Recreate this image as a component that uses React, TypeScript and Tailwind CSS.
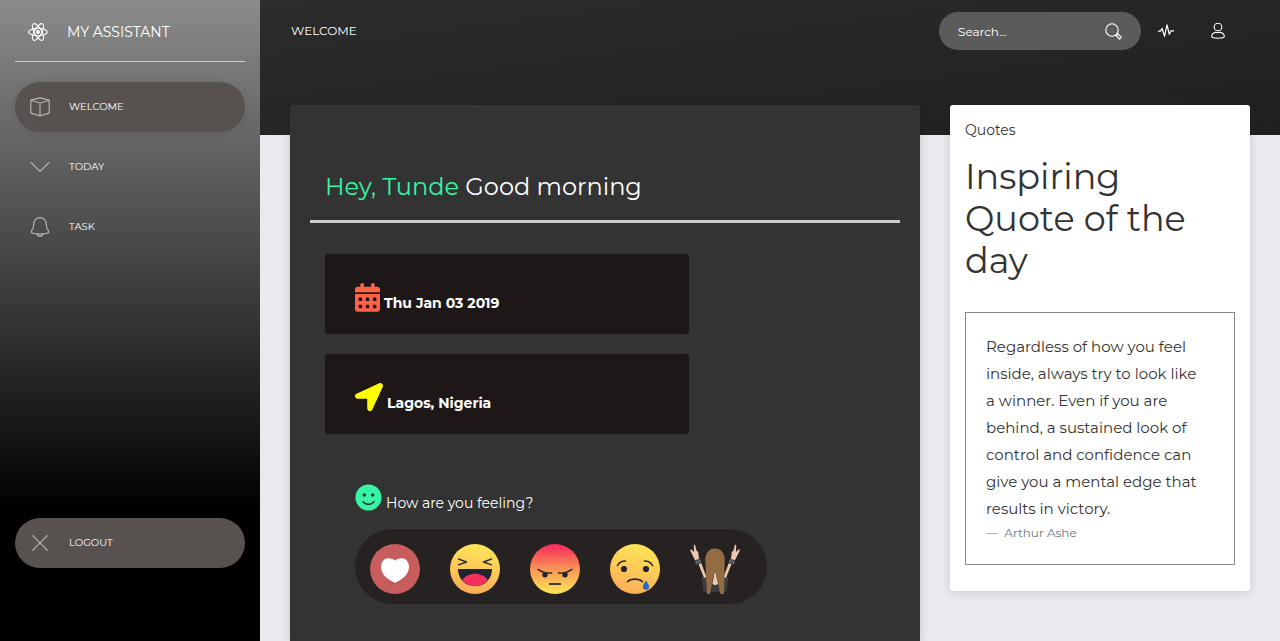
import React from "react";
import { FaCalendarAlt, FaLocationArrow, FaSmile } from "react-icons/fa";

type IconProps = { className?: string };

function AtomIcon({ className }: IconProps) {
  return (
    <svg viewBox="0 0 24 24" fill="none" stroke="currentColor" strokeWidth="1.3" className={className}>
      <ellipse cx="12" cy="12" rx="11.3" ry="4.4" />
      <ellipse cx="12" cy="12" rx="11.3" ry="4.4" transform="rotate(60 12 12)" />
      <ellipse cx="12" cy="12" rx="11.3" ry="4.4" transform="rotate(120 12 12)" />
      <circle cx="12" cy="12" r="2.3" fill="currentColor" stroke="none" />
    </svg>
  );
}

function BoxIcon({ className }: IconProps) {
  return (
    <svg viewBox="0 0 20 20" fill="none" stroke="currentColor" strokeWidth="1.2" strokeLinejoin="round" className={className}>
      <path d="M10 .8 19.200 3.200V16.200L10 18.800 .8 16.200V3.200ZM.8 3.200 10 6 19.200 3.200M10 6V18.800" />
    </svg>
  );
}

function ChevronIcon({ className }: IconProps) {
  return (
    <svg viewBox="0 0 20 20" fill="none" stroke="currentColor" strokeWidth="1.2" strokeLinecap="round" className={className}>
      <path d="M1 5.300 10 14.300 19 5.300" />
    </svg>
  );
}

function BellIcon({ className }: IconProps) {
  return (
    <svg viewBox="0 0 20 20" fill="none" stroke="currentColor" strokeWidth="1.2" strokeLinejoin="round" className={className}>
      <path d="M10 .6C5.800 .6 3.700 4 3.700 7.300C3.700 11 3 12 1.600 13.800C.8 15 1.400 16 3.200 16.400C7.500 17.300 12.500 17.300 16.800 16.400C18.600 16 19.200 15 18.400 13.800C17 12 16.300 11 16.300 7.300C16.300 4 14.200 .6 10 .6Z" />
      <path d="M7.300 17.200C7.800 20 12.200 20 12.700 17.200" />
    </svg>
  );
}

function CrossIcon({ className }: IconProps) {
  return (
    <svg viewBox="0 0 20 20" fill="none" stroke="currentColor" strokeWidth="1.2" strokeLinecap="round" className={className}>
      <path d="M2.7 2.7 17.3 17.3M17.3 2.7 2.7 17.3" />
    </svg>
  );
}

function SearchIcon({ className }: IconProps) {
  return (
    <svg viewBox="0 0 17 17" fill="none" stroke="currentColor" strokeWidth="1.1" className={className}>
      <circle cx="7" cy="7" r="6.2" />
      <path d="M11.3 11.7 12.3 12.7M12.9 10.9 16.3 14.3 14.6 16.2 11.2 12.7Z" />
    </svg>
  );
}

function PulseIcon({ className }: IconProps) {
  return (
    <svg viewBox="0 0 16 16" fill="none" stroke="currentColor" strokeWidth="1.2" strokeLinejoin="round" className={className}>
      <path d="M0 8.200H2.500L4 5.300 6.500 13.300 9 1.800 11.300 11.300 13 7.800H16" />
    </svg>
  );
}

function UserIcon({ className }: IconProps) {
  return (
    <svg viewBox="0 0 16 16" fill="none" stroke="currentColor" strokeWidth="1.1" className={className}>
      <ellipse cx="8" cy="4" rx="3.800" ry="3.800" />
      <path d="M5.500 9.200C3.300 9.900 1.700 11.500 1.700 13.500C1.700 14.600 4 15.200 8 15.200S14.300 14.600 14.300 13.500C14.300 11.500 12.700 9.900 10.500 9.200C9 9.700 7 9.700 5.500 9.200Z" />
    </svg>
  );
}

function LoveFace() {
  return (
    <svg viewBox="0 0 50 50" className="size-full">
      <circle cx="25" cy="25" r="25" fill="#c75d5c" />
      <path d="M25 40.500C20 37 11 31 11 22.500C11 17.500 14.500 14.600 18.200 14.600C21.300 14.600 23.800 16.200 25 18.500C26.200 16.200 28.700 14.600 31.800 14.600C35.500 14.600 39 17.500 39 22.500C39 31 30 37 25 40.500Z" fill="#9e4644" opacity=".5" />
      <path d="M25 39C19 36 11 31.500 11 22.500C11 17.500 14.500 14.200 18.200 14.200C21.300 14.200 24 15 25 16.800C26 15 28.700 14.200 31.800 14.200C35.500 14.200 39 17.500 39 22.500C39 31.500 31 36 25 39Z" fill="#fff" />
    </svg>
  );
}

function LaughFace() {
  return (
    <svg viewBox="0 0 50 50" className="size-full">
      <defs>
        <linearGradient id="laugh" x1=".6" y1="0" x2=".4" y2="1">
          <stop offset=".1" stopColor="#fee157" />
          <stop offset="1" stopColor="#fcac59" />
        </linearGradient>
      </defs>
      <circle cx="25" cy="25" r="25" fill="url(#laugh)" />
      <path d="M8 25H42C42 34.500 35.500 42 25 42S8 34.500 8 25Z" fill="#1e2530" />
      <path d="M12 36C15 32 20 29.700 25 29.700S35 32 38 36C34.300 40 30 42 25 42S15.700 40 12 36Z" fill="#f72f5c" />
      <path d="M8.500 15 16.500 18 8.500 20.800M41.500 15 33.500 18 41.500 20.800" fill="none" stroke="#2d2c2f" strokeWidth="1.400" strokeLinecap="round" strokeLinejoin="round" />
    </svg>
  );
}

function AngryFace() {
  return (
    <svg viewBox="0 0 50 50" className="size-full">
      <defs>
        <linearGradient id="angry" x1=".5" y1="0" x2=".5" y2="1">
          <stop offset=".05" stopColor="#f7315b" />
          <stop offset=".5" stopColor="#fa9455" />
          <stop offset=".95" stopColor="#fee157" />
        </linearGradient>
      </defs>
      <circle cx="25" cy="25" r="25" fill="url(#angry)" />
      <circle cx="15" cy="30.700" r="2.700" fill="#1e2530" />
      <circle cx="35" cy="30.700" r="2.700" fill="#1e2530" />
      <path d="M8 25.300C12 28 16 29.300 21.500 29M42 25.300C38 28 34 29.300 28.500 29" fill="none" stroke="#2d2c2f" strokeWidth="1.500" strokeLinecap="round" />
      <path d="M19 40H31" stroke="#2d2c2f" strokeWidth="1.800" />
    </svg>
  );
}

function SadFace() {
  return (
    <svg viewBox="0 0 50 50" className="size-full">
      <defs>
        <linearGradient id="sad" x1=".65" y1="0" x2=".35" y2="1">
          <stop offset=".1" stopColor="#fee157" />
          <stop offset="1" stopColor="#fcac59" />
        </linearGradient>
      </defs>
      <circle cx="25" cy="25" r="25" fill="url(#sad)" />
      <circle cx="14" cy="25" r="3.100" fill="#1e2530" />
      <circle cx="36" cy="25" r="3.100" fill="#1e2530" />
      <path d="M7.500 21.500C9 18.500 11.500 17 15.500 17M42.500 21.500C41 18.500 38.500 17 34.500 17M17.500 37.700C21 34.300 29 34.300 32.500 37.700" fill="none" stroke="#2d2c2f" strokeWidth="1.600" strokeLinecap="round" />
      <path d="M36 36.500C37.500 39 39.100 40.800 39.100 42.700A3.100 3.100 0 0 1 32.900 42.700C32.900 40.800 34.500 39 36 36.500Z" fill="#2667c6" />
    </svg>
  );
}

function RockArm() {
  return (
    <g>
      <path d="M14 34 8.300 19.500 4.500 15.200 0 6 1.200 5.200 4 8 3.800 1.200 5 .5 6.500 6.500 8.200 8 9 14.500 11.200 19 16.500 33Z" fill="#ecc9ae" />
      <path d="M4.700 16.500 10 14.300 11.500 19.200 6.500 21Z" fill="#4b4b4f" />
      <path d="M5.800 18.700 10.800 16.700" stroke="#b5b5b8" strokeWidth="1" strokeDasharray="1.200 1.200" />
    </g>
  );
}

function RockFace() {
  return (
    <svg viewBox="0 0 50 50" className="size-full">
      <path d="M11.500 33.500 15.500 32 20 36H30L34.500 32 38.500 33.500 36.500 48H13.500Z" fill="#3d3d3f" />
      <RockArm />
      <g transform="matrix(-1 0 0 1 50 0)">
        <RockArm />
      </g>
      <path d="M25 26 28 39.500C26.500 41.500 23.500 41.500 22.500 39.500Z" fill="#ecc9ae" />
      <path d="M15.300 16C15.300 9 19 4.500 25 4.500S34.700 9 34.700 16L34 50H30.300L27.500 36 25 26 22.500 36 20 50H17Z" fill="#936c43" />
    </svg>
  );
}

const moods = [
  { label: "Loved", Face: LoveFace },
  { label: "Happy", Face: LaughFace },
  { label: "Angry", Face: AngryFace },
  { label: "Sad", Face: SadFace },
  { label: "Rocking", Face: RockFace },
];

type NavItemProps = {
  label: string;
  Icon: (props: IconProps) => React.ReactElement;
  filled?: boolean;
};

function NavItem({ label, Icon, filled }: NavItemProps) {
  const base = "flex h-[50px] items-center gap-[19px] rounded-full px-[15px] text-[10px] text-white";
  return (
    <a href="#" className={filled ? `${base} bg-[#575250] shadow-[0_1px_10px_rgba(0,0,0,0.08)]` : base}>
      <Icon className="size-5 text-white/55" />
      <span className="pb-[2px]">{label}</span>
    </a>
  );
}

function Sidebar() {
  return (
    <aside className="flex w-[260px] shrink-0 flex-col bg-linear-to-b/srgb from-[#8b8b8b] to-black to-80% px-[15px]">
      <a href="#" className="flex h-[62px] items-center gap-[19px] border-b border-white/60 pt-[2px] pl-[13px] text-sm text-white">
        <AtomIcon className="size-5" />
        MY ASSISTANT
      </a>
      <nav className="mt-5 flex grow flex-col gap-[10px] pb-[73px]">
        <NavItem label="WELCOME" Icon={BoxIcon} filled />
        <NavItem label="TODAY" Icon={ChevronIcon} />
        <NavItem label="TASK" Icon={BellIcon} />
        <div className="mt-auto">
          <NavItem label="LOGOUT" Icon={CrossIcon} filled />
        </div>
      </nav>
    </aside>
  );
}

function TopBar() {
  return (
    <header className="h-[135px] shrink-0 bg-linear-to-br from-[#2c2c2c] to-[#202020] px-[31px] pt-3 text-white">
      <div className="flex h-[38px] items-center">
        <a href="#" className="mr-auto text-xs">WELCOME</a>
        <form className="flex h-full w-[202px] items-center rounded-full bg-[#5b5b5b] px-[19px]">
          <input
            type="search"
            aria-label="Search"
            placeholder="Search..."
            className="min-w-0 grow bg-transparent pt-[2px] text-xs outline-none placeholder:text-white"
          />
          <button type="button" aria-label="Submit search">
            <SearchIcon className="size-[17px]" />
          </button>
        </form>
        <button type="button" aria-label="Activity" className="ml-[17px]">
          <PulseIcon className="size-4" />
        </button>
        <button type="button" aria-label="Account" className="mr-[23px] ml-9">
          <UserIcon className="size-4" />
        </button>
      </div>
    </header>
  );
}

function WelcomeCard() {
  return (
    <section className="min-h-full rounded-t-[3px] bg-[#333333] px-5 pt-16 text-white shadow-[0_2px_10px_rgba(0,0,0,0.15)]">
      <h1 className="border-b-[3px] border-[#cccccc] px-[15px] pb-[15px] text-2xl leading-9">
        <span className="text-[#36f5a5]">Hey, Tunde</span> Good morning
      </h1>
      <div className="mt-[31px] flex flex-col gap-5 px-[15px]">
        <p className="flex h-20 w-[65%] items-start gap-1 rounded-[3px] bg-[#1e1717] px-[30px] pt-[29px] text-sm font-bold">
          <FaCalendarAlt className="h-[29px] w-[25px] text-[#ff6347]" />
          <span className="pt-[10px]">Thu Jan 03 2019</span>
        </p>
        <p className="flex h-20 w-[65%] items-start gap-1 rounded-[3px] bg-[#1e1717] px-[30px] pt-[29px] text-sm font-bold">
          <FaLocationArrow className="size-7 text-[#ffff00]" />
          <span className="pt-[10px]">Lagos, Nigeria</span>
        </p>
        <div className="px-[30px] pt-[29px]">
          <p className="flex h-7 items-center gap-1 text-sm">
            <FaSmile className="size-[27px] text-[#36f5a5]" />
            <span className="pt-3">How are you feeling?</span>
          </p>
          <div className="mt-[18px] flex w-fit gap-[30px] rounded-full bg-[#272222] pt-[15px] pr-[27px] pb-[10px] pl-[15px]">
            {moods.map(({ label, Face }) => (
              <button key={label} type="button" aria-label={label} className="size-[50px]">
                <Face />
              </button>
            ))}
          </div>
        </div>
      </div>
    </section>
  );
}

function QuoteCard() {
  return (
    <section className="rounded-[3px] bg-white px-[15px] pt-[15px] pb-[26px] text-[#333333] shadow-[0_2px_10px_rgba(0,0,0,0.12)]">
      <p className="text-sm">Quotes</p>
      <h2 className="mt-4 text-[35px] leading-[42px]">Inspiring Quote of the day</h2>
      <blockquote className="mt-[30px] border border-[#888888] p-5">
        <p className="pr-3 text-[15px] leading-[27px]">
          Regardless of how you feel inside, always try to look like a winner. Even if you are behind, a sustained look of
          control and confidence can give you a mental edge that results in victory.
        </p>
        <footer className="text-xs leading-[22px] text-[#6c757d]">—&nbsp; Arthur Ashe</footer>
      </blockquote>
    </section>
  );
}

export default function App() {
  return (
    <div className="flex h-screen overflow-hidden bg-[#e9eaee] font-['Montserrat','Inter',sans-serif]">
      <Sidebar />
      <div className="flex min-w-0 grow flex-col">
        <TopBar />
        <main className="-mt-[30px] flex min-h-0 grow px-[15px]">
          <div className="w-2/3 px-[15px]">
            <WelcomeCard />
          </div>
          <div className="w-1/3 px-[15px]">
            <QuoteCard />
          </div>
        </main>
      </div>
    </div>
  );
}
